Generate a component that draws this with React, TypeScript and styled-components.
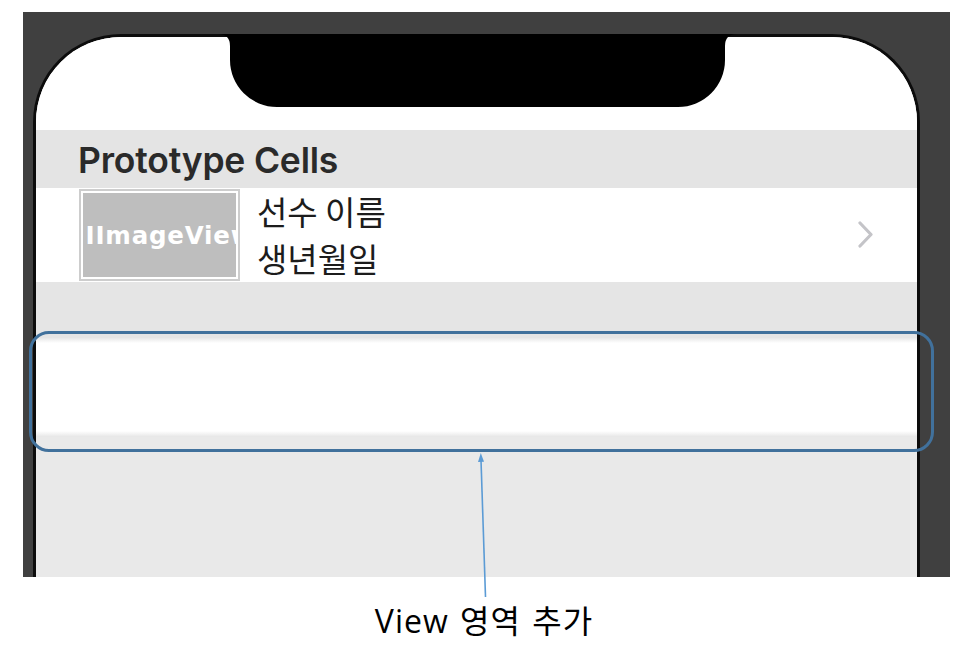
import React from "react";
import styled, { createGlobalStyle } from "styled-components";

const GlobalStyle = createGlobalStyle`
  html, body { margin: 0; padding: 0; background: #ffffff; }
  body { font-family: "Liberation Sans", Arial, sans-serif; }
  * { box-sizing: border-box; }
`;

const Page = styled.div`
  position: relative;
  width: 976px;
  height: 645px;
  overflow: hidden;
  padding-top: 12px;
  background: #ffffff;
`;

const Frame = styled.div`
  position: relative;
  margin-left: 23px;
  width: 927px;
  height: 565px;
  background: #404040;
  overflow: hidden;
  padding: 22px 0 0 10px;
`;

const Screen = styled.div`
  width: 887px;
  height: 580px;
  border: 3px solid #0c0c0c;
  border-bottom: none;
  border-radius: 88px 88px 0 0;
  background: #ffffff;
  overflow: hidden;
  display: flex;
  flex-direction: column;
`;

const Notch = styled.svg`
  position: absolute;
  left: 195px;
  top: 6px;
  width: 519px;
  height: 89px;
`;

const TopSpace = styled.div`
  height: 93px;
  flex-shrink: 0;
  background: #ffffff;
`;

const SectionHeader = styled.div`
  height: 58px;
  flex-shrink: 0;
  background: #e4e4e4;
  display: flex;
  align-items: center;
  padding: 2px 0 0 42px;
  font-family: Inter, "Liberation Sans", sans-serif;
  font-weight: 600;
  font-size: 35.5px;
  color: #2a2a2a;
  letter-spacing: -0.2px;
`;

const Cell = styled.div`
  height: 94px;
  flex-shrink: 0;
  background: #ffffff;
  display: flex;
  align-items: center;
  padding: 0 42px 0 43px;
`;

const ImageBox = styled.div`
  width: 161px;
  height: 92px;
  margin-right: 17px;
  border: 2px solid #cdcdcd;
  padding: 2px;
  background: #ffffff;
  flex-shrink: 0;
`;

const ImageFill = styled.div`
  width: 100%;
  height: 100%;
  background: #bebebe;
  overflow: hidden;
  display: flex;
  align-items: center;
  justify-content: center;
  font-family: "DejaVu Sans", sans-serif;
  font-weight: 700;
  font-size: 24.5px;
  letter-spacing: 0.8px;
  color: #ffffff;
  white-space: nowrap;
`;

const Labels = styled.div`
  flex: 1;
  display: flex;
  flex-direction: column;
  font-family: "Noto Sans CJK KR", "Noto Sans", sans-serif;
  font-size: 33px;
  line-height: 47px;
  color: #1c1c1c;
  padding-bottom: 1px;
`;

const Chevron = styled.svg`
  width: 18px;
  height: 28px;
  flex-shrink: 0;
`;

const Gap = styled.div`
  height: 55px;
  flex-shrink: 0;
  background: #e5e5e5;
`;

const AddedView = styled.div`
  height: 100px;
  flex-shrink: 0;
  background: linear-gradient(
    to bottom,
    #e3e3e3 0px,
    #ffffff 6px,
    #ffffff 94px,
    #e6e6e6 100px
  );
`;

const Rest = styled.div`
  flex: 1;
  background: #e9e9e9;
`;

const Caption = styled.div`
  margin: 26px 0 0 23px;
  width: 927px;
  padding-right: 5px;
  text-align: center;
  font-family: "Open Sans", "Noto Sans CJK KR", sans-serif;
  font-size: 32px;
  line-height: 36px;
  letter-spacing: 1px;
  word-spacing: 2px;
  color: #000000;
`;

const Highlight = styled.div`
  position: absolute;
  left: 29px;
  top: 331px;
  width: 905px;
  height: 121px;
  border: 3px solid #41719c;
  border-radius: 20px;
  pointer-events: none;
`;

const Arrow = styled.svg`
  position: absolute;
  left: 470px;
  top: 448px;
  width: 30px;
  height: 152px;
  pointer-events: none;
`;

export default function App() {
  return (
    <Page>
      <GlobalStyle />
      <Frame>
        <Screen>
          <TopSpace />
          <SectionHeader>Prototype Cells</SectionHeader>
          <Cell>
            <ImageBox>
              <ImageFill>UIImageView</ImageFill>
            </ImageBox>
            <Labels>
              <span>선수 이름</span>
              <span>생년월일</span>
            </Labels>
            <Chevron viewBox="0 0 18 28">
              <polyline
                points="3,2 14,13.5 3,25"
                fill="none"
                stroke="#c4c4c8"
                strokeWidth="3.2"
                strokeLinecap="round"
                strokeLinejoin="round"
              />
            </Chevron>
          </Cell>
          <Gap />
          <AddedView />
          <Rest />
        </Screen>
        <Notch viewBox="0 0 519 89">
          <path
            d="M0,16 Q12,16 12,28 L12,42 A47,47 0 0 0 59,89 L460,89 A47,47 0 0 0 507,42 L507,28 Q507,16 519,16 Z"
            fill="#000000"
          />
        </Notch>
      </Frame>
      <Caption>View 영역 추가</Caption>
      <Highlight />
      <Arrow viewBox="0 0 30 152">
        <line x1="11" y1="12" x2="15.5" y2="149" stroke="#5b9bd5" strokeWidth="1.6" />
        <polygon points="10.8,5 8,14 14,13.8" fill="#5b9bd5" />
      </Arrow>
    </Page>
  );
}
